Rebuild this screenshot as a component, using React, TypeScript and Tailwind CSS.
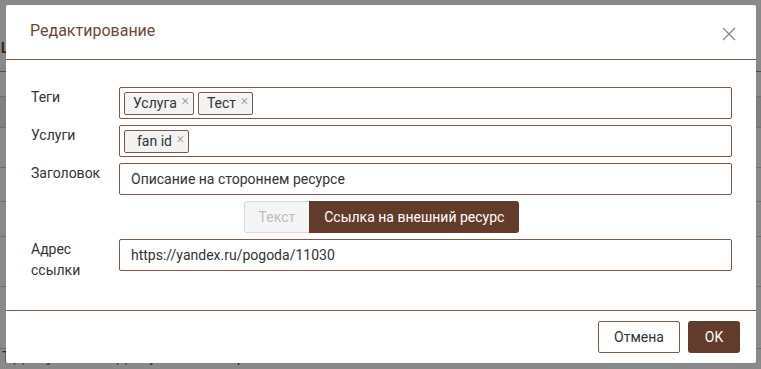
const brown = "bg-[#633b2a]";

const Chip = ({ label, pad = "pl-2" }: { label: string; pad?: string }) => (
  <div className={`relative h-[23px] flex items-center ${pad} pr-[16px] bg-[#f3f3f3] border border-[#7a5a4b] rounded-[2px] text-[14px] text-[#333]`}>
    {label}
    <span className="absolute right-[4px] top-[0px] text-[14px] leading-none text-[#8a8a8a] font-light">×</span>
  </div>
);

const Row = ({ label, children }: { label: React.ReactNode; children: React.ReactNode }) => (
  <div className="flex items-start">
    <div className="w-[88px] shrink-0 text-[14px] leading-[21px] text-[#333]">{label}</div>
    <div className="flex-1">{children}</div>
  </div>
);

const Background = () => (
  <div className="absolute inset-0 bg-[#898989] overflow-hidden">
    <div className="flex flex-col">
      <div className="h-[72px] border-b border-[#5a4a44] text-[#3a2418] font-bold text-[14px] pt-[38px] pl-[1px]">Ц</div>
      <div className="h-[25px] border-b border-[#6f6f6f]" />
      <div className="h-[31px] border-b border-[#6f6f6f] bg-[#7f7f7f]" />
      <div className="h-[40px] border-b border-[#6f6f6f]" />
      <div className="h-[34px] border-b border-[#6f6f6f]" />
      <div className="h-[35px] border-b border-[#6f6f6f]" />
      <div className="h-[50px] border-b border-[#6f6f6f]" />
      <div className="h-[62px] border-b border-[#6f6f6f]" />
      <div className="text-[14px] text-[#2a2a2a] pl-[2px] leading-[16px]">Т Доступен всем Доступен многостро чный текст</div>
    </div>
  </div>
);

export default function App() {
  return (
    <div className="relative w-[761px] h-[369px] overflow-hidden" style={{ fontFamily: "Roboto, 'Liberation Sans', sans-serif" }}>
      <Background />
      <div className="absolute left-[6px] top-[5px] w-[750px] h-[358px] bg-white rounded-[2px] flex flex-col">
        <div className="h-[55px] shrink-0 flex items-center justify-between pl-[24px] pr-[20px] border-b border-[#7a5a4b]">
          <div className="text-[16px] text-[#6d4837] pb-[2px]">Редактирование</div>
          <svg width="14" height="14" viewBox="0 0 14 14" className="mt-[4px]">
            <path d="M1 1 L13 13 M13 1 L1 13" stroke="#8a8a8a" strokeWidth="1.3" fill="none" />
          </svg>
        </div>
        <div className="flex-1 flex flex-col gap-[6px] pl-[25px] pr-[24px] pt-[27px]">
          <Row label="Теги">
            <div className="h-[32px] border border-[#7a5a4b] rounded-[2px] flex items-center gap-[4px] px-[4px]">
              <Chip label="Услуга" />
              <Chip label="Тест" />
            </div>
          </Row>
          <Row label="Услуги">
            <div className="h-[32px] border border-[#7a5a4b] rounded-[2px] flex items-center gap-[4px] px-[4px]">
              <Chip label="fan id" pad="pl-[12px]" />
            </div>
          </Row>
          <Row label="Заголовок">
            <div className="h-[32px] border border-[#7a5a4b] rounded-[2px] flex items-center px-[11px] text-[14px] text-[#333]">
              Описание на стороннем ресурсе
            </div>
          </Row>
          <div className="flex justify-center">
            <div className="flex h-[32px] rounded-[3px] overflow-hidden text-[14px]">
              <div className="px-[14px] flex items-center bg-[#f5f5f5] border border-[#d9d9d9] border-r-0 rounded-l-[3px] text-[#bdbdbd]">Текст</div>
              <div className={`px-[15px] flex items-center ${brown} text-white`}>Ссылка на внешний ресурс</div>
            </div>
          </div>
          <Row label={<>Адрес<br />ссылки</>}>
            <div className="h-[32px] border border-[#7a5a4b] rounded-[2px] flex items-center px-[11px] text-[14px] text-[#333]">
              https://yandex.ru/pogoda/11030
            </div>
          </Row>
        </div>
        <div className="h-[53px] shrink-0 border-t border-[#7a5a4b] flex items-center justify-end gap-[8px] pr-[16px]">
          <button className="h-[32px] w-[82px] border border-[#7a5a4b] rounded-[2px] bg-white text-[14px] text-[#333]">Отмена</button>
          <button className={`h-[32px] w-[52px] rounded-[3px] ${brown} text-[14px] text-white`}>OK</button>
        </div>
      </div>
    </div>
  );
}
